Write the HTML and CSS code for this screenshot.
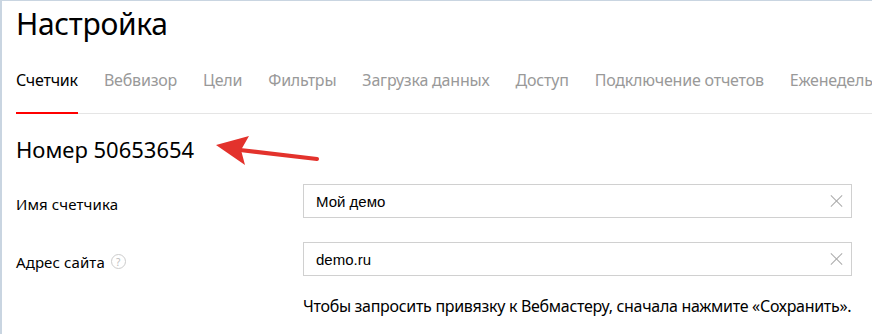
FILE: index.html
```html
<!DOCTYPE html>
<html lang="ru">
<head>
    <meta charset="UTF-8">
    <title>Настройка</title>
    <link rel="stylesheet" href="styles.css">
</head>
<body>
    <div class="page">
        <h1>Настройка</h1>

        <!-- Вкладки -->
        <ul class="tabs">
            <li class="tab active">Счетчик</li>
            <li class="tab">Вебвизор</li>
            <li class="tab">Цели</li>
            <li class="tab">Фильтры</li>
            <li class="tab">Загрузка данных</li>
            <li class="tab">Доступ</li>
            <li class="tab">Подключение отчетов</li>
            <li class="tab">Еженедельные отчеты</li>
        </ul>

        <div class="counter">
            <h2>Номер 50653654</h2>
            <!-- стрелка-пометка -->
            <svg class="arrow" width="110" height="30" viewBox="0 0 110 30">
                <path d="M103 23 L26 14" stroke="#e3322c" stroke-width="4" stroke-linecap="round" fill="none"/>
                <path d="M2 9 L35 0 L27 14 L31 29 Z" fill="#e3322c"/>
            </svg>
        </div>

        <div class="form-row">
            <label class="label">Имя счетчика</label>
            <div class="field">
                <input type="text" value="Мой демо">
                <span class="clear"></span>
            </div>
        </div>

        <div class="form-row">
            <label class="label">Адрес сайта <span class="hint">?</span></label>
            <div class="field">
                <input type="text" value="demo.ru">
                <span class="clear"></span>
            </div>
        </div>

        <p class="note">Чтобы запросить привязку к Вебмастеру, сначала нажмите «Сохранить».</p>
    </div>
</body>
</html>
```

FILE: styles.css
```css
body {
    margin: 0;
    font-family: "Noto Sans", Arial, sans-serif;
    color: #000;
    background: #fff;
    overflow: hidden;
}

.page {
    border-top: 1px solid #c9d5e1;
    border-left: 2px solid #c9d5e1;
    padding-left: 14px;
    height: 333px;
    overflow: hidden;
}

h1 {
    margin: 0;
    padding-top: 5px;
    font-size: 30px;
    font-weight: 400;
    line-height: 36px;
    letter-spacing: -0.3px;
}

.tabs {
    display: flex;
    list-style: none;
    margin: 0;
    padding: 0;
    padding-top: 28px;
    border-bottom: 1px solid #e5e5e5;
    white-space: nowrap;
}

.tab {
    margin-right: 26px;
    padding-bottom: 22px;
    font-size: 16px;
    line-height: 20px;
    color: #999;
    letter-spacing: -0.2px;
    border-bottom: 2px solid transparent;
    margin-bottom: -1px;
}

.tab.active {
    color: #000;
    border-bottom-color: #f00;
}

.counter {
    position: relative;
    padding-top: 20px;
}

h2 {
    margin: 0;
    font-size: 22px;
    font-weight: 400;
    line-height: 30px;
}

.arrow {
    position: absolute;
    left: 198px;
    top: 22px;
}

.form-row {
    display: flex;
    align-items: center;
    margin-top: 20px;
    padding-right: 20px;
}

.form-row + .form-row {
    margin-top: 24px;
}

.label {
    width: 287px;
    padding-top: 5px;
    font-size: 15px;
    letter-spacing: 0.1px;
    display: flex;
    align-items: center;
}

.hint {
    display: inline-flex;
    align-items: center;
    justify-content: center;
    width: 13px;
    height: 13px;
    margin-left: 6px;
    border: 1px solid #ccc;
    border-radius: 50%;
    font-size: 10px;
    color: #bbb;
}

.field {
    position: relative;
    flex: 1;
}

.field input {
    display: block;
    width: 100%;
    box-sizing: border-box;
    height: 34px;
    border: 1px solid #d0d0d0;
    padding: 0 40px 0 12px;
    font-family: "Liberation Sans", Arial, sans-serif;
    font-size: 15px;
    color: #000;
    outline: none;
}

.clear {
    position: absolute;
    right: 9px;
    top: 11px;
    width: 12px;
    height: 12px;
}

.clear::before, .clear::after {
    content: '';
    position: absolute;
    left: 5px;
    top: -2px;
    width: 1px;
    height: 16px;
    background: #aaa;
    transform: rotate(45deg);
}

.clear::after {
    transform: rotate(-45deg);
}

.note {
    margin: 19px 0 0 287px;
    font-size: 16px;
    letter-spacing: -0.3px;
    white-space: nowrap;
}
```
